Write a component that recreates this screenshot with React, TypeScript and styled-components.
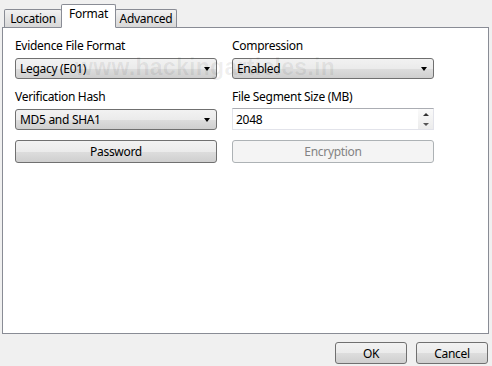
import styled, { createGlobalStyle } from 'styled-components';

const Global = createGlobalStyle`
html, body {
    margin: 0;
    padding: 0;
    background: #f0f0f0;
}
body {
    font-family: 'Noto Sans', 'Open Sans', sans-serif;
    font-size: 12px;
    letter-spacing: -0.3px;
    color: #000;
}
`;

interface TabProps {
    active?: boolean;
    width: number;
}

export default function App () {
    return (
        <>
            <Global />
            <Window>
                <TabBar>
                    <Tab width={58}>Location</Tab>
                    <Tab width={55} active>Format</Tab>
                    <Tab width={62}>Advanced</Tab>
                </TabBar>
                <Panel>
                    <Watermark>www.hackingarticles.in</Watermark>
                    <Grid>
                        <Field>
                            <Label>Evidence File Format</Label>
                            <Combo>
                                <span>Legacy (E01)</span>
                                <Arrow />
                            </Combo>
                        </Field>
                        <Field>
                            <Label>Compression</Label>
                            <Combo>
                                <span>Enabled</span>
                                <Arrow />
                            </Combo>
                        </Field>
                        <Field>
                            <Label>Verification Hash</Label>
                            <Combo>
                                <span>MD5 and SHA1</span>
                                <Arrow />
                            </Combo>
                        </Field>
                        <Field>
                            <Label>File Segment Size (MB)</Label>
                            <Spin>
                                <span>2048</span>
                                <SpinButtons>
                                    <SpinArrow up />
                                    <SpinArrow />
                                </SpinButtons>
                            </Spin>
                        </Field>
                        <Button>Password</Button>
                        <Button disabled>Encryption</Button>
                    </Grid>
                </Panel>
                <Footer>
                    <DialogButton>OK</DialogButton>
                    <DialogButton>Cancel</DialogButton>
                </Footer>
            </Window>
        </>
    );
}

const Window = styled.div`
display: flex;
flex-direction: column;
width: 492px;
height: 366px;
background: #f0f0f0;
`;

const TabBar = styled.div`
display: flex;
align-items: flex-end;
height: 27px;
padding-left: 4px;
position: relative;
z-index: 2;
`;

const Tab = styled.div<TabProps>`
box-sizing: border-box;
display: flex;
align-items: center;
justify-content: center;
width: ${p => p.width}px;
height: ${p => p.active ? '24px' : '18px'};
padding-bottom: ${p => p.active ? '5px' : '1px'};
margin: 0 -1px ${p => p.active ? '-1px' : '0'} 0;
border: 1px solid #898c95;
border-bottom: ${p => p.active ? '1px solid #fff' : '0'};
border-radius: 2px 2px 0 0;
background: ${p => p.active ? '#fff' : 'linear-gradient(#f2f2f2, #e4e4e4 50%, #d8d8d8)'};
position: relative;
z-index: ${p => p.active ? 2 : 1};
`;

const Panel = styled.div`
flex: 1;
position: relative;
margin: 0 3px 0 2px;
background: #fff;
border: 1px solid #898c95;
`;

const Watermark = styled.div`
position: absolute;
left: 72px;
top: 26px;
font-family: 'Liberation Sans', sans-serif;
font-weight: bold;
font-size: 23px;
letter-spacing: 0.3px;
color: rgba(0, 0, 0, 0.07);
pointer-events: none;
z-index: 3;
`;

const Grid = styled.div`
display: grid;
grid-template-columns: 202px 202px;
column-gap: 15px;
row-gap: 10px;
padding: 10px 0 0 12px;
`;

const Field = styled.div`
display: flex;
flex-direction: column;
gap: 4px;
`;

const Label = styled.div`
height: 16px;
line-height: 16px;
`;

const Combo = styled.div`
box-sizing: border-box;
display: flex;
align-items: center;
justify-content: space-between;
height: 21px;
padding: 0 6px 0 4px;
border: 1px solid #707070;
border-radius: 3px;
background: linear-gradient(#f2f2f2, #ebebeb 50%, #dddddd 51%, #cfcfcf);
`;

const Arrow = styled.span`
width: 0;
height: 0;
border-left: 3.5px solid transparent;
border-right: 3.5px solid transparent;
border-top: 4px solid #000;
`;

const Spin = styled.div`
box-sizing: border-box;
display: flex;
align-items: center;
justify-content: space-between;
height: 22px;
margin-top: -1px;
padding-left: 3px;
border: 1px solid #e2e3ea;
border-top-color: #abadb3;
background: #fff;
`;

const SpinButtons = styled.div`
display: flex;
flex-direction: column;
align-items: center;
justify-content: space-around;
width: 15px;
height: 100%;
background: linear-gradient(#fafafa, #ececec);
`;

const SpinArrow = styled.span<{ up?: boolean }>`
width: 0;
height: 0;
border-left: 3px solid transparent;
border-right: 3px solid transparent;
${p => p.up ? 'border-bottom: 3px solid #333;' : 'border-top: 3px solid #555;'}
`;

const Button = styled.button`
box-sizing: border-box;
height: 23px;
margin-top: 0;
font-family: inherit;
font-size: 12px;
letter-spacing: -0.3px;
color: #000;
border: 1px solid #707070;
border-radius: 3px;
background: linear-gradient(#f2f2f2, #ebebeb 50%, #dddddd 51%, #cfcfcf);
padding: 0;

&:disabled {
    color: #838383;
    border-color: #adb2b5;
    background: #f4f4f4;
}
`;

const Footer = styled.div`
display: flex;
justify-content: flex-end;
gap: 9px;
height: 32px;
padding: 8px 4px 0 0;
box-sizing: border-box;
`;

const DialogButton = styled(Button)`
width: 72px;
height: 22px;
`;
